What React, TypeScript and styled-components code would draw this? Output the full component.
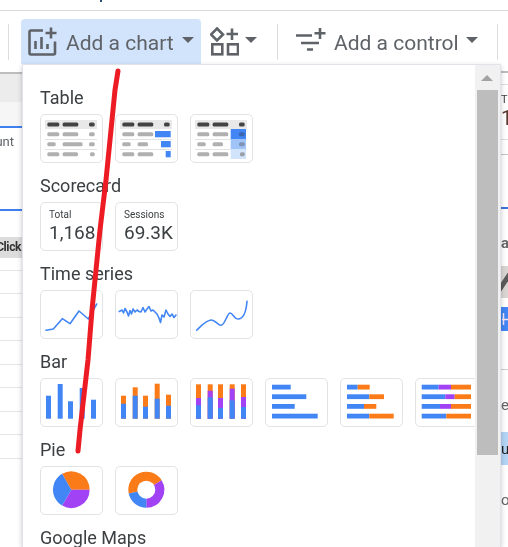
import React from "react";
import styled, { createGlobalStyle } from "styled-components";

const BLUE = "#4285f4";
const ORANGE = "#fa7b17";
const PURPLE = "#a142f4";
const DARK = "#5f6368";

const Global = createGlobalStyle`
  html, body { margin: 0; padding: 0; background: #fff; overflow: hidden; }
  #root { width: 508px; height: 547px; }
  * { box-sizing: border-box; }
`;

const Page = styled.div`
  position: relative;
  width: 508px;
  height: 547px;
  overflow: hidden;
  background: #fff;
  font-family: Roboto, "Liberation Sans", sans-serif;
  filter: blur(0.35px);
`;

const TopBand = styled.div`
  height: 11px;
  padding-left: 100px;
  border-bottom: 1px solid #dcdcdc;
`;
const Descender = styled.div`
  width: 1.5px;
  height: 2px;
  background: #2a4a7a;
`;

const Toolbar = styled.div`
  display: flex;
  align-items: flex-start;
  height: 53px;
  padding-left: 8px;
`;
const Separator = styled.div<{ $gap: number }>`
  width: 1px;
  height: 36px;
  margin-top: 13px;
  margin-left: ${(p) => p.$gap}px;
  background: #dadce0;
  flex: none;
`;
const ChartButton = styled.div`
  display: flex;
  align-items: center;
  width: 180px;
  height: 45px;
  margin: 8px 0 0 12px;
  padding-left: 7px;
  background: #d2e3fc;
  border-radius: 4px 4px 0 0;
  flex: none;
`;
const ToolGroup = styled.div<{ $ml: number }>`
  display: flex;
  align-items: center;
  height: 45px;
  margin: 8px 0 0 ${(p) => p.$ml}px;
  flex: none;
`;
const ToolIcon = styled.svg`
  display: block;
  flex: none;
  fill: none;
  stroke: ${DARK};
  stroke-width: 2.6;
`;
const ToolLabel = styled.span<{ $ml: number }>`
  margin: 2px 0 0 ${(p) => p.$ml}px;
  font-size: 21px;
  line-height: 28px;
  color: ${DARK};
  white-space: nowrap;
`;
const Caret = styled.span<{ $ml: number }>`
  flex: none;
  width: 0;
  height: 0;
  margin-left: ${(p) => p.$ml}px;
  margin-bottom: 3px;
  border-left: 6px solid transparent;
  border-right: 6px solid transparent;
  border-top: 6.5px solid ${DARK};
`;

const Body = styled.div`
  display: flex;
  justify-content: space-between;
  height: 483px;
`;

const LeftStrip = styled.div`
  width: 22px;
  overflow: hidden;
  padding-top: 8px;
`;
const LeftHead = styled.div`
  height: 30px;
  background: #ececec;
  border-top: 2px solid #bdbdbd;
`;
const LeftSub = styled.div`
  height: 24px;
  background: #f6f6f6;
`;
const BlueRule = styled.div`
  height: 2px;
  background: #3f80ee;
  flex: none;
`;
const LeftCell = styled.div<{ $h: number }>`
  display: flex;
  justify-content: flex-end;
  height: ${(p) => p.$h}px;
  padding: 6px 8px 0 0;
  font-size: 13px;
  line-height: 16px;
  color: ${DARK};
  white-space: nowrap;
`;
const ClickCell = styled.div`
  display: flex;
  justify-content: flex-end;
  height: 21px;
  margin-top: 26px;
  padding-right: 1px;
  background: #dcdcdc;
  font-size: 12px;
  letter-spacing: -0.4px;
  font-weight: 700;
  line-height: 21px;
  color: #333;
  white-space: nowrap;
`;
const LeftRow = styled.div`
  height: 23.5px;
  border-bottom: 1px solid #e6e6e6;
`;
const FirstLeftRow = styled(LeftRow)`
  height: 12.5px;
`;

const RightStrip = styled.div`
  width: 7px;
  overflow: hidden;
  display: flex;
  flex-direction: column;
`;
const Gap = styled.div<{ $h: number }>`
  height: ${(p) => p.$h}px;
  flex: none;
`;
const RightRule = styled.div<{ $c: string; $h?: number }>`
  height: ${(p) => p.$h ?? 1}px;
  background: ${(p) => p.$c};
  flex: none;
`;
const RightStat = styled.div`
  height: 54px;
  padding-top: 8px;
  flex: none;
  color: #3c4043;
  white-space: nowrap;
`;
const StatLabel = styled.div`
  font-size: 11px;
  line-height: 14px;
`;
const StatValue = styled.div`
  font-size: 20px;
  line-height: 22px;
  color: #5a3a30;
`;
const RightText = styled.div<{ $h: number; $pt: number; $bold?: boolean }>`
  height: ${(p) => p.$h}px;
  padding-top: ${(p) => p.$pt}px;
  flex: none;
  font-size: 15px;
  line-height: 18px;
  font-weight: ${(p) => (p.$bold ? 700 : 400)};
  color: #666;
  white-space: nowrap;
`;
const RightSelected = styled.div`
  height: 33px;
  padding-top: 8px;
  flex: none;
  background: #b3d4f5;
  font-size: 15px;
  line-height: 18px;
  color: #222;
`;
const StripArt = styled.svg`
  display: block;
  flex: none;
`;

const Popup = styled.div`
  position: absolute;
  left: 22px;
  top: 64px;
  width: 479px;
  height: 483px;
  display: flex;
  background: #fff;
  border: 1px solid #e1e3e8;
  border-bottom: 0;
  box-shadow: 0 2px 5px rgba(0, 0, 0, 0.22);
`;
const MenuContent = styled.div`
  flex: 1;
  min-width: 0;
  overflow: hidden;
  padding: 10px 0 0 17px;
`;
const Section = styled.section`
  padding-top: 11px;
`;
const SectionTitle = styled.h3`
  margin: 0 0 4px;
  font-size: 18px;
  font-weight: 400;
  line-height: 24px;
  color: #3c4043;
  white-space: nowrap;
`;
const TileRow = styled.div`
  display: flex;
  gap: 12px;
`;
const Tile = styled.div`
  width: 63px;
  height: 49px;
  flex: none;
  border: 1px solid #e2e3e4;
  border-radius: 5px;
  background: #fff;
  overflow: hidden;
`;
const TileArt = styled.svg`
  display: block;
`;
const ScoreTile = styled(Tile)`
  padding: 6px 0 0 8px;
  color: #3c4043;
`;
const ScoreLabel = styled.div`
  font-size: 10px;
  line-height: 12px;
`;
const ScoreValue = styled.div`
  margin-top: 1px;
  font-size: 19px;
  line-height: 22px;
  white-space: nowrap;
`;

const Scrollbar = styled.div`
  width: 25px;
  flex: none;
  display: flex;
  flex-direction: column;
  background: #f1f1f1;
  padding-right: 2px;
`;
const ScrollUp = styled.div`
  height: 25px;
  display: flex;
  align-items: center;
  justify-content: center;
  padding-left: 1px;
  &::before {
    content: "";
    width: 0;
    height: 0;
    border-left: 6px solid transparent;
    border-right: 6px solid transparent;
    border-bottom: 6px solid #a3a3a3;
  }
`;
const ScrollThumb = styled.div`
  height: 365px;
  margin-left: 2px;
  background: #bdbdbd;
`;

const RedMark = styled.svg`
  position: absolute;
  left: 0;
  top: 0;
  pointer-events: none;
`;

/* ---- tile drawings ---- */
const Art = ({ children }: { children: React.ReactNode }) => (
  <TileArt width={61} height={47} viewBox="1 1 61 47">
    {children}
  </TileArt>
);

const Pill = ({ x1, x2, y, c }: { x1: number; x2: number; y: number; c: string }) => (
  <rect x={x1} y={y - 2} width={x2 - x1} height={4} rx={1.5} fill={c} />
);

const TableBase = ({ rows }: { rows: number[][] }) => (
  <>
    <rect x={5} y={6} width={52} height={9} fill="#e8e8e8" />
    <Pill x1={7.3} x2={19.3} y={10.5} c="#444" />
    <Pill x1={22.6} x2={38.3} y={10.5} c="#444" />
    <Pill x1={49} x2={54.7} y={10.5} c="#444" />
    <rect x={5} y={25} width={52} height={0.9} fill="#e0e0e0" />
    <rect x={5} y={35} width={52} height={0.9} fill="#e0e0e0" />
    {rows.map((r, i) => (
      <React.Fragment key={i}>
        <Pill x1={7.3} x2={r[0]} y={20.3 + i * 10} c="#b0b0b0" />
        <Pill x1={22.6} x2={r[1]} y={20.3 + i * 10} c="#b0b0b0" />
      </React.Fragment>
    ))}
  </>
);

const TableA = () => (
  <Art>
    <TableBase rows={[[19.3, 38.3], [15.7, 42.6], [19.3, 38]]} />
    <Pill x1={49} x2={54.7} y={20.3} c="#b0b0b0" />
    <Pill x1={49} x2={54.7} y={30.3} c="#b0b0b0" />
    <Pill x1={50} x2={54.7} y={40.3} c="#b0b0b0" />
  </Art>
);
const TableB = () => (
  <Art>
    <TableBase rows={[[19.3, 38.3], [15.7, 33], [19.3, 38.3]]} />
    <rect x={40} y={17} width={15.7} height={6.3} fill={BLUE} />
    <rect x={46} y={27} width={9.7} height={6.3} fill={BLUE} />
    <rect x={50.7} y={37} width={5} height={6.3} fill={BLUE} />
  </Art>
);
const TableC = () => (
  <Art>
    <TableBase rows={[[19.3, 38.3], [15.7, 33], [19.3, 38.3]]} />
    <rect x={40.7} y={15} width={15.3} height={10} fill={BLUE} />
    <rect x={40.7} y={25} width={15.3} height={10} fill="#a0c3f8" />
    <rect x={40.7} y={35} width={15.3} height={10} fill="#d2e3fc" />
    <Pill x1={49} x2={54.7} y={20.3} c="#3a66b0" />
    <Pill x1={49} x2={54.7} y={30.3} c="#7f93b5" />
    <Pill x1={50} x2={54.7} y={40.3} c="#9a9fa8" />
  </Art>
);

const Line = ({ d }: { d: string }) => (
  <path d={d} fill="none" stroke={BLUE} strokeWidth={1.6} strokeLinejoin="round" strokeLinecap="round" />
);
const SeriesA = () => (
  <Art>
    <Line d="M6 40.3L13.3 39L22.3 28.7L30 33.7L39 21L48.3 29L56.7 14" />
  </Art>
);
const SeriesB = () => (
  <Art>
    <Line d="M4.3 21.5L7 20L8.5 23L10 18.5L12 22L13.5 26L15 20.5L16.5 24L18 19L20 22L22 20L24 21.5L26 22L28 17.5L30 22L32 19L34 16.5L36 21L38 20L40 22L42 24L44 28L45.5 32.5L47 25L49 27L51 20L53 24L55 26.5L57 24L59 27.5L61 25" />
  </Art>
);
const SeriesC = () => (
  <Art>
    <Line d="M6.7 40.3C10 37 15 31 21 30C25 29.5 28 35.5 31 35.3C35 35 37 23.5 40 23C43 23 44 29 48 29C53 29 56 24 57 11.3" />
  </Art>
);

const columnX = [6, 17.7, 28, 39.7, 51];
const BarsA = () => (
  <Art>
    {[17.7, 6, 23.3, 10, 21.7].map((t, i) => (
      <rect key={i} x={columnX[i]} y={t} width={5} height={40.7 - t} fill={BLUE} />
    ))}
  </Art>
);
const BarsB = () => (
  <Art>
    {[17.7, 9.3, 17.7, 5.7, 16.7].map((t, i) => (
      <rect key={i} x={columnX[i]} y={t} width={5} height={40.7 - t} fill={ORANGE} />
    ))}
    {[25.7, 17.7, 28.7, 20.7, 27.7].map((t, i) => (
      <rect key={i} x={columnX[i]} y={t} width={5} height={40.7 - t} fill={BLUE} />
    ))}
  </Art>
);
const BarsC = () => (
  <Art>
    {columnX.map((x, i) => (
      <rect key={i} x={x} y={6.3} width={5} height={34.4} fill={ORANGE} />
    ))}
    {[20, 12.7, 20, 10.7, 19].map((t, i) => (
      <rect key={i} x={columnX[i]} y={t} width={5} height={40.7 - t} fill={PURPLE} />
    ))}
    {[27.3, 19.3, 30, 22.3, 29].map((t, i) => (
      <rect key={i} x={columnX[i]} y={t} width={5} height={40.7 - t} fill={BLUE} />
    ))}
  </Art>
);

const rowY = [6.7, 16.3, 26, 35.7];
const Segments = ({ rows, x0 }: { rows: [string, number][][]; x0: number }) => (
  <>
    {rows.map((row, r) => {
      let from = x0;
      return row.map(([c, to], i) => {
        const node = <rect key={`${r}-${i}`} x={from} y={rowY[r]} width={to - from} height={4.8} fill={c} />;
        from = to;
        return node;
      });
    })}
  </>
);
const HBarsA = () => (
  <Art>
    <Segments x0={7} rows={[[[BLUE, 25.7]], [[BLUE, 41.3]], [[BLUE, 29.7]], [[BLUE, 52.7]]]} />
  </Art>
);
const HBarsB = () => (
  <Art>
    <Segments
      x0={7}
      rows={[
        [[BLUE, 17.7], [ORANGE, 29.7]],
        [[BLUE, 29.3], [ORANGE, 44]],
        [[BLUE, 24], [ORANGE, 36.3]],
        [[BLUE, 29.3], [ORANGE, 53.7]],
      ]}
    />
  </Art>
);
const HBarsC = () => (
  <Art>
    <Segments
      x0={6.7}
      rows={[
        [[BLUE, 23.7], [PURPLE, 36], [ORANGE, 56]],
        [[BLUE, 30.3], [PURPLE, 39.7], [ORANGE, 56]],
        [[BLUE, 25], [PURPLE, 36], [ORANGE, 56]],
        [[BLUE, 31.3], [ORANGE, 56]],
      ]}
    />
  </Art>
);

const polar = (cx: number, cy: number, r: number, deg: number) => {
  const a = ((deg - 90) * Math.PI) / 180;
  return [cx + r * Math.cos(a), cy + r * Math.sin(a)];
};
const wedge = (cx: number, cy: number, r: number, from: number, to: number) => {
  const [x1, y1] = polar(cx, cy, r, from);
  const [x2, y2] = polar(cx, cy, r, to);
  const large = (to - from + 360) % 360 > 180 ? 1 : 0;
  return `M${cx} ${cy}L${x1} ${y1}A${r} ${r} 0 ${large} 1 ${x2} ${y2}Z`;
};
const PieArt = () => (
  <Art>
    <path d={wedge(31.3, 23.7, 18.3, 330, 90)} fill={ORANGE} />
    <path d={wedge(31.3, 23.7, 18.3, 90, 210)} fill={PURPLE} />
    <path d={wedge(31.3, 23.7, 18.3, 210, 330)} fill={BLUE} />
  </Art>
);
const DonutArt = () => (
  <Art>
    <path d={wedge(31.3, 23.7, 18, 258, 58)} fill={ORANGE} />
    <path d={wedge(31.3, 23.7, 18, 58, 180)} fill={PURPLE} />
    <path d={wedge(31.3, 23.7, 18, 180, 258)} fill={BLUE} />
    <circle cx={31.3} cy={23.7} r={9} fill="#fff" />
  </Art>
);

export default function App() {
  return (
    <>
      <Global />
      <Page>
        <TopBand>
          <Descender />
        </TopBand>
        <Toolbar>
          <Separator $gap={0} />
          <ChartButton>
            <ToolIcon width={29} height={29} viewBox="0 0 29 29">
              <path d="M15 3.5H3a1.5 1.5 0 0 0-1.5 1.5v21a1.5 1.5 0 0 0 1.5 1.5h22.5a1.5 1.5 0 0 0 1.5-1.5V14.5" />
              <path d="M7.5 14v8M13.5 10v12M19.5 17v5M23 0.5v11M17.5 6h11" />
            </ToolIcon>
            <ToolLabel $ml={9}>Add a chart</ToolLabel>
            <Caret $ml={8} />
          </ChartButton>
          <ToolGroup $ml={9}>
            <ToolIcon width={29} height={29} viewBox="0 0 29 29">
              <path d="M7 1.5L13 7.5L7 13.5L1 7.5Z" />
              <path d="M22 1.5V13M16.5 7H28" />
              <rect x="2.3" y="17.3" width="10" height="10" />
              <rect x="18" y="17.3" width="10" height="10" />
            </ToolIcon>
            <Caret $ml={6} />
          </ToolGroup>
          <Separator $gap={20} />
          <ToolGroup $ml={18}>
            <ToolIcon width={30} height={29} viewBox="0 0 30 29">
              <path d="M0 8.5H16M5 16H23M11 22.5H17M24 1V12M18.5 6.3H29.5" />
            </ToolIcon>
            <ToolLabel $ml={8}>Add a control</ToolLabel>
            <Caret $ml={7} />
          </ToolGroup>
          <Separator $gap={19} />
        </Toolbar>
        <Body>
          <LeftStrip>
            <LeftHead />
            <LeftSub />
            <BlueRule />
            <LeftCell $h={81}>Count</LeftCell>
            <BlueRule />
            <ClickCell>Click</ClickCell>
            <FirstLeftRow />
            {Array.from({ length: 8 }).map((_, i) => (
              <LeftRow key={i} />
            ))}
          </LeftStrip>
          <RightStrip>
            <Gap $h={7} />
            <RightRule $c="#bdbdbd" $h={2} />
            <Gap $h={11} />
            <RightRule $c="#dedede" />
            <RightStat>
              <StatLabel>T</StatLabel>
              <StatValue>1</StatValue>
            </RightStat>
            <RightRule $c="#dedede" />
            <Gap $h={14} />
            <RightRule $c="#c4c4c4" />
            <Gap $h={52} />
            <RightRule $c="#3f74d8" $h={2} />
            <RightText $h={57} $pt={25} $bold>
              at
            </RightText>
            <StripArt width={7} height={32} viewBox="0 0 7 32">
              <rect width="7" height="32" fill="#d9d5d2" />
              <path d="M-2 24L9 8" stroke="#5a5a5a" strokeWidth="5" />
            </StripArt>
            <Gap $h={9} />
            <StripArt width={7} height={24} viewBox="0 0 7 24">
              <rect width="7" height="24" fill={BLUE} />
              <path d="M2.5 6V18M1 12.5H7" stroke="#f3e6f5" strokeWidth="1.5" />
            </StripArt>
            <Gap $h={38} />
            <RightRule $c="#cfcfcf" />
            <RightText $h={62} $pt={26}>
              e
            </RightText>
            <RightSelected>u</RightSelected>
            <RightText $h={82} $pt={26}>
              of
            </RightText>
          </RightStrip>
        </Body>
        <Popup>
          <MenuContent>
            <Section>
              <SectionTitle>Table</SectionTitle>
              <TileRow>
                <Tile><TableA /></Tile>
                <Tile><TableB /></Tile>
                <Tile><TableC /></Tile>
              </TileRow>
            </Section>
            <Section>
              <SectionTitle>Scorecard</SectionTitle>
              <TileRow>
                <ScoreTile>
                  <ScoreLabel>Total</ScoreLabel>
                  <ScoreValue>1,168</ScoreValue>
                </ScoreTile>
                <ScoreTile>
                  <ScoreLabel>Sessions</ScoreLabel>
                  <ScoreValue>69.3K</ScoreValue>
                </ScoreTile>
              </TileRow>
            </Section>
            <Section>
              <SectionTitle>Time series</SectionTitle>
              <TileRow>
                <Tile><SeriesA /></Tile>
                <Tile><SeriesB /></Tile>
                <Tile><SeriesC /></Tile>
              </TileRow>
            </Section>
            <Section>
              <SectionTitle>Bar</SectionTitle>
              <TileRow>
                <Tile><BarsA /></Tile>
                <Tile><BarsB /></Tile>
                <Tile><BarsC /></Tile>
                <Tile><HBarsA /></Tile>
                <Tile><HBarsB /></Tile>
                <Tile><HBarsC /></Tile>
              </TileRow>
            </Section>
            <Section>
              <SectionTitle>Pie</SectionTitle>
              <TileRow>
                <Tile><PieArt /></Tile>
                <Tile><DonutArt /></Tile>
              </TileRow>
            </Section>
            <Section>
              <SectionTitle>Google Maps</SectionTitle>
            </Section>
          </MenuContent>
          <Scrollbar>
            <ScrollUp />
            <ScrollThumb />
          </Scrollbar>
        </Popup>
        <RedMark width={508} height={547} viewBox="0 0 508 547">
          <path
            d="M118 71L115 90L111 130L106 180L100 230L96 270L92 310L88 360L84 395L80 430L78 451"
            fill="none"
            stroke="#ed1c24"
            strokeWidth={5}
            strokeLinecap="round"
            strokeLinejoin="round"
          />
        </RedMark>
      </Page>
    </>
  );
}
